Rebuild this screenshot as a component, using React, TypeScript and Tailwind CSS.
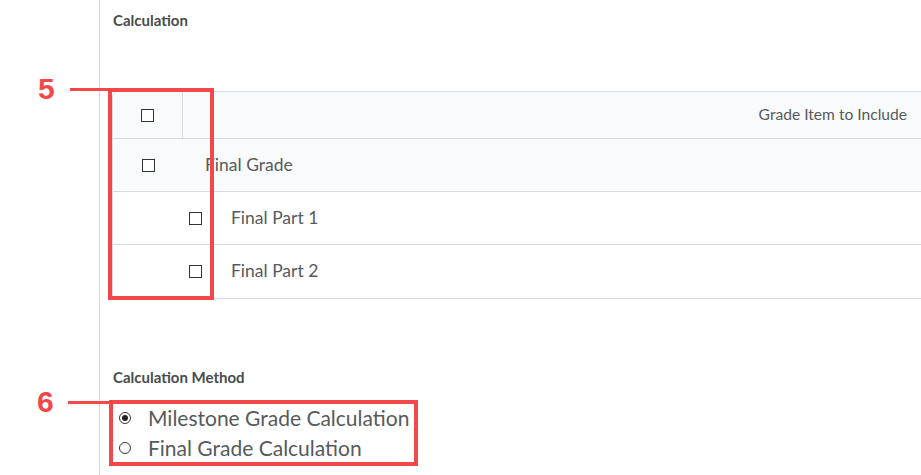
const font = { fontFamily: 'Lato, "Open Sans", sans-serif' };

function Box() {
  return <span className="block w-[13px] h-[13px] border border-[#333] bg-white" />;
}

function Radio({ on }: { on?: boolean }) {
  return (
    <span className="flex items-center justify-center w-[12px] h-[12px] rounded-full border border-[#333] bg-white">
      {on && <span className="block w-[6px] h-[6px] rounded-full bg-[#222]" />}
    </span>
  );
}

export default function App() {
  return (
    <div className="relative w-[921px] h-[475px] overflow-hidden bg-white text-[#494c4e]" style={font}>
      <div className="flex h-full">
        <div className="w-[100px] shrink-0 border-r border-[#d6d8dc]" />
        <div className="flex-1 pl-[12px]">
          <div className="pt-[11px] pl-[1px] text-[15px] leading-[18px] font-bold">Calculation</div>

          {/* grade items table */}
          <div className="mt-[62px] w-[830px] border border-[#d6dae2] rounded-tl-[6px] text-[#565a5c]">
            <div className="flex h-[47px] bg-[#f9fafb] border-b border-[#d6dae2] rounded-tl-[6px]">
              <div className="w-[70px] flex items-center justify-center border-r border-[#d6dae2]">
                <Box />
              </div>
              <div className="flex-1 flex items-center justify-end pr-[34px] text-[15.6px]">Grade Item to Include</div>
            </div>
            <div className="flex items-center h-[53px] bg-[#f9fafb] border-b border-[#d6dae2]">
              <div className="w-[70px] flex justify-center">
                <Box />
              </div>
              <div className="pl-[22px] text-[17.5px]">Final Grade</div>
            </div>
            <div className="flex items-center h-[53px] border-b border-[#d6dae2] pl-[76px]">
              <Box />
              <div className="pl-[29px] text-[17.5px]">Final Part 1</div>
            </div>
            <div className="flex items-center h-[53px] pl-[76px]">
              <Box />
              <div className="pl-[29px] text-[17.5px]">Final Part 2</div>
            </div>
          </div>

          <div className="mt-[69px] pl-[1px] text-[15px] leading-[18px] font-bold">Calculation Method</div>
          <div className="mt-[20px] flex flex-col gap-[6px] pl-[7px]">
            <div className="flex items-center gap-[17px] h-[24px] text-[21px] text-[#565a5c]">
              <Radio on />
              <span>Milestone Grade Calculation</span>
            </div>
            <div className="flex items-center gap-[17px] h-[24px] text-[21px] text-[#565a5c]">
              <Radio />
              <span>Final Grade Calculation</span>
            </div>
          </div>
        </div>
      </div>

      {/* annotation 5 */}
      <div className="absolute left-[38px] top-[72px] text-[30px] leading-[34px] font-bold text-[#f44848]" style={{ fontFamily: '"Liberation Sans", Arial, sans-serif' }}>5</div>
      <div className="absolute left-[70px] top-[88px] w-[40px] h-[3px] bg-[#f44848]" />
      <div className="absolute left-[108px] top-[88px] w-[106px] h-[212px] border-4 border-[#f44848]" />

      {/* annotation 6 */}
      <div className="absolute left-[37px] top-[385px] text-[30px] leading-[34px] font-bold text-[#f44848]" style={{ fontFamily: '"Liberation Sans", Arial, sans-serif' }}>6</div>
      <div className="absolute left-[68px] top-[401px] w-[42px] h-[3px] bg-[#f44848]" />
      <div className="absolute left-[109px] top-[400px] w-[309px] h-[66px] border-4 border-[#f44848]" />
    </div>
  );
}
